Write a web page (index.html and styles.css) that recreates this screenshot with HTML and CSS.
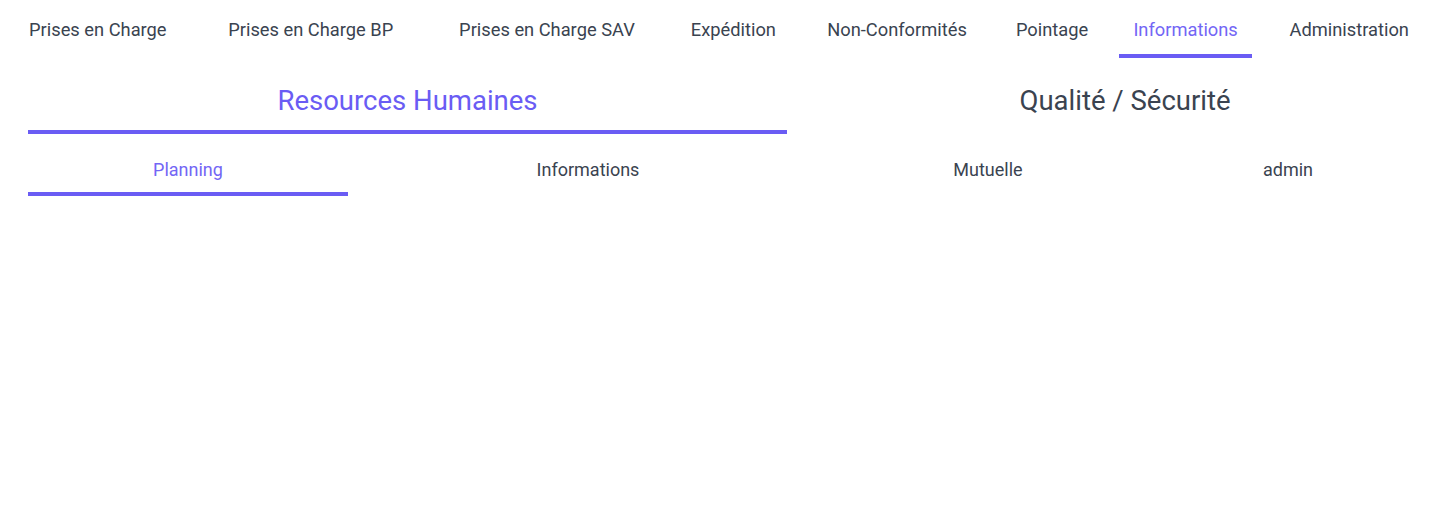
FILE: index.html
```html
<!DOCTYPE html>
<html lang="fr">
<head>
<meta charset="utf-8">
<title>Informations</title>
<link rel="stylesheet" href="styles.css">
</head>
<body>
<div class="page">
  <nav class="main-nav">
    <div class="nav-cell"><a class="nav-link">Prises en Charge</a></div>
    <div class="nav-cell"><a class="nav-link">Prises en Charge BP</a></div>
    <div class="nav-cell"><a class="nav-link">Prises en Charge SAV</a></div>
    <div class="nav-cell"><a class="nav-link">Expédition</a></div>
    <div class="nav-cell"><a class="nav-link">Non-Conformités</a></div>
    <div class="nav-cell"><a class="nav-link">Pointage</a></div>
    <div class="nav-cell"><a class="nav-link active">Informations</a></div>
    <div class="nav-cell"><a class="nav-link">Administration</a></div>
  </nav>

  <div class="section-tabs">
    <div class="section-tab active">Resources Humaines</div>
    <div class="section-tab">Qualité / Sécurité</div>
  </div>

  <div class="sub-tabs">
    <div class="sub-tab active">Planning</div>
    <div class="sub-tab">Informations</div>
    <div class="sub-tab">Mutuelle</div>
    <div class="sub-tab">admin</div>
  </div>
</div>
</body>
</html>
```

FILE: styles.css
```css
html, body {
  margin: 0;
  padding: 0;
  background: #ffffff;
}

body {
  font-family: Roboto, "Noto Sans", "Liberation Sans", sans-serif;
  color: #3a4350;
  overflow: hidden;
}

.page {
  width: 1436px;
  height: 529px;
  overflow: hidden;
}

/* Top navigation */
.main-nav {
  display: grid;
  grid-template-columns: 159fr 187fr 197fr 106fr 160fr 92fr 125fr 141fr;
  width: 1436px;
}

.nav-cell {
  display: flex;
  justify-content: center;
}

.nav-link {
  display: block;
  padding: 18px 14px 12px;
  line-height: 24px;
  font-size: 18.3px;
  font-weight: 400;
  color: #3a4350;
  white-space: nowrap;
  border-bottom: 4px solid transparent;
  cursor: pointer;
}

.nav-link.active {
  color: #7366f5;
  border-bottom-color: #6a5cf4;
}

/* Section tabs */
.section-tabs {
  display: grid;
  grid-template-columns: 759px 676px;
  margin-left: 28px;
}

.section-tab {
  text-align: center;
  padding: 26px 0 12px;
  line-height: 34px;
  font-size: 27.5px;
  font-weight: 400;
  color: #3a4350;
  border-bottom: 4px solid transparent;
  white-space: nowrap;
}

.section-tab.active {
  color: #6a5cf4;
  border-bottom-color: #6a5cf4;
}

/* Sub tabs */
.sub-tabs {
  display: grid;
  grid-template-columns: 320px 480px 320px 280px;
  margin-left: 28px;
}

.sub-tab {
  text-align: center;
  padding: 24px 0 10px;
  line-height: 24px;
  font-size: 18px;
  font-weight: 400;
  color: #3a4350;
  border-bottom: 4px solid transparent;
  white-space: nowrap;
}

.sub-tab.active {
  color: #7366f5;
  border-bottom-color: #6a5cf4;
}
```
